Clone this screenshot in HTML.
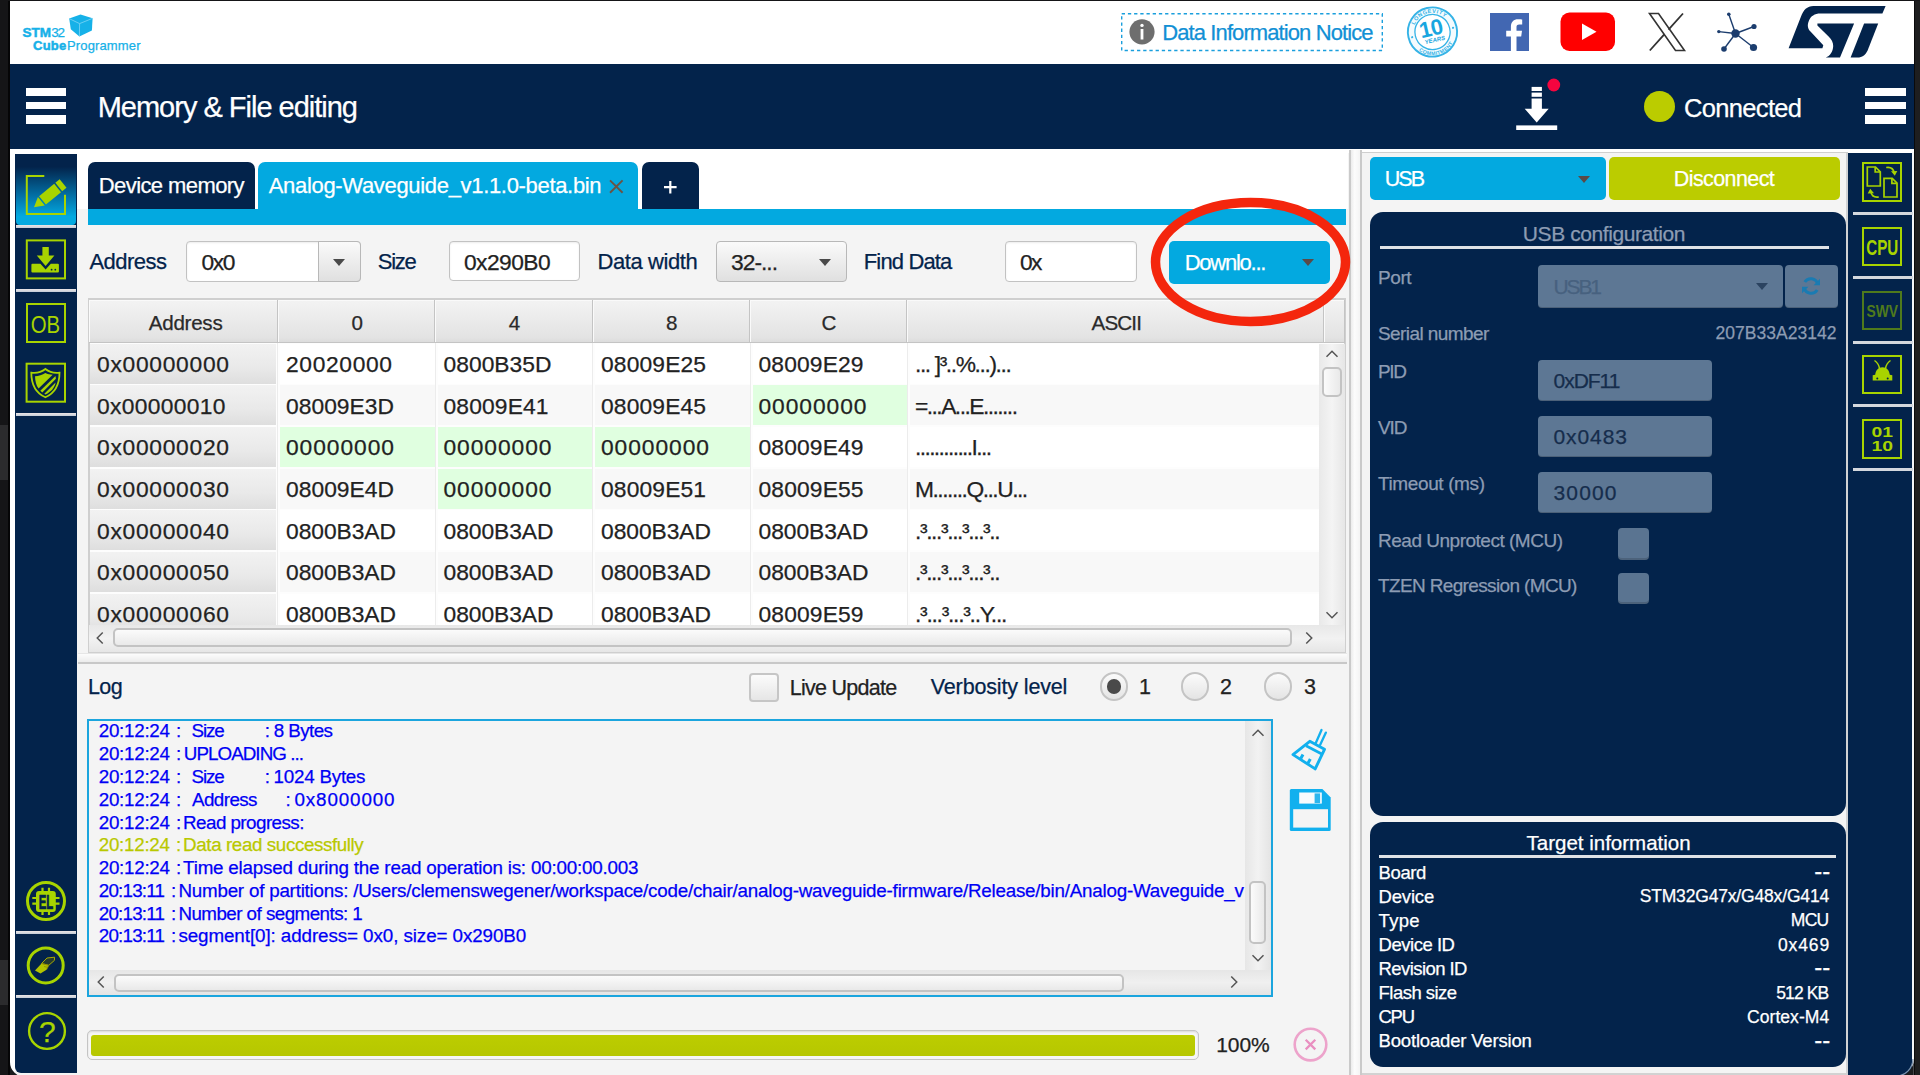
<!DOCTYPE html>
<html lang="en"><head><meta charset="utf-8"><title>STM32CubeProgrammer</title>
<style>
html,body{margin:0;padding:0}
body{width:1920px;height:1075px;overflow:hidden;background:#1b1c1e;position:relative;font-family:"Liberation Sans",sans-serif}
div,span.t,svg{position:absolute;box-sizing:border-box}
span.t{white-space:pre;display:block;-webkit-text-stroke:0.25px}

</style></head><body>
<div style="left:0px;top:0px;width:9px;height:1075px;background:#151517;"></div>
<div style="left:0px;top:424.6px;width:8.2px;height:55.2px;background:#2b2b2d;"></div>
<div style="left:0px;top:959.5px;width:8.2px;height:45.5px;background:#2b2b2d;"></div>
<div style="left:8.2px;top:0px;width:1.8px;height:1075px;background:#050506;"></div>
<div style="left:1914px;top:0px;width:6px;height:1075px;background:#1e1e1f;"></div>
<div style="left:1913.8px;top:1px;width:1.2px;height:1074px;background:#0a0a0b;"></div>
<div style="left:0px;top:0px;width:1920px;height:1.2px;background:#151517;"></div>
<div style="left:10px;top:1px;width:1904px;height:1079px;background:#f4f4f4;border-radius:0 0 11px 11px;"></div>
<div style="left:10px;top:1px;width:1904px;height:63px;background:#fff;"></div>
<div style="left:10px;top:64px;width:1904px;height:85px;background:#03234b;"></div>
<div style="left:10px;top:149px;width:1338px;height:60px;background:#fff;"></div>
<div style="left:10px;top:149px;width:1904px;height:4px;background:#fff;"></div>
<span class="t" id="t1" style="top:25.77px;font-size:13.5px;line-height:13.5px;color:#16b1e8;font-weight:700;left:22.5px;-webkit-text-stroke:0.5px;">STM</span>
<span class="t" id="t2" style="top:25.77px;font-size:13.5px;line-height:13.5px;color:#16b1e8;letter-spacing:-1.331px;left:51.3px;">32</span>
<span class="t" id="t3" style="top:39.30px;font-size:13px;line-height:13px;color:#16b1e8;font-weight:700;letter-spacing:0.267px;left:33px;-webkit-text-stroke:0.5px;">Cube</span>
<span class="t" id="t4" style="top:39.30px;font-size:13px;line-height:13px;color:#16b1e8;letter-spacing:0.139px;left:67px;">Programmer</span>
<svg style="left:68px;top:13px" width="26" height="25" viewBox="0 0 26 25">
<path d="M1.2 5.6 L12.5 1.4 L24.6 5.2 L23.9 17.4 L11.4 23.6 L2.8 16.2 Z" fill="#16b1e8"/>
<path d="M1.6 5.8 L11.6 10.6 L24.4 5.4 M11.6 10.6 L11.4 23.2" stroke="#7fd6f5" stroke-width="0.8" fill="none"/>
</svg>
<svg style="left:1119px;top:11px" width="266" height="42" viewBox="0 0 266 42"><rect x="2.700" y="2.700" width="260.600" height="36.800" fill="none" stroke="#1a9fdd" stroke-width="1.400" stroke-dasharray="3.300 2.900"/></svg>
<svg style="left:1129px;top:19px" width="26" height="26" viewBox="0 0 26 26">
<circle cx="13" cy="12.8" r="12.6" fill="#6e6e6e"/>
<rect x="11.6" y="10" width="2.8" height="10.5" fill="#fff"/><circle cx="13" cy="6.4" r="1.7" fill="#fff"/></svg>
<span class="t" id="t5" style="top:21.88px;font-size:22px;line-height:22px;color:#1190d5;letter-spacing:-0.905px;left:1162.3px;">Data Information Notice</span>
<svg style="left:1404px;top:4px" width="58" height="58" viewBox="0 0 58 58">
<g transform="rotate(-13 28.500 28)">
<circle cx="28.500" cy="28" r="24.600" fill="#f3fbfe" stroke="#35b3e6" stroke-width="1.900"/>
<circle cx="28.500" cy="28" r="17.600" fill="#fff" stroke="#35b3e6" stroke-width="1.300"/>
<path id="arcT" d="M9.300 28 A19.200 19.200 0 0 1 47.700 28" fill="none"/>
<path id="arcB" d="M5.300 28 A23.200 23.200 0 0 0 51.700 28" fill="none"/>
<text font-family="Liberation Sans, sans-serif" font-weight="700" font-size="5.600" fill="#35b3e6" letter-spacing="0.500"><textPath href="#arcT" startOffset="50%" text-anchor="middle">LONGEVITY</textPath></text>
<text font-family="Liberation Sans, sans-serif" font-weight="700" font-size="5.200" fill="#35b3e6" letter-spacing="0.400"><textPath href="#arcB" startOffset="50%" text-anchor="middle">COMMITMENT</textPath></text>
<circle cx="7.500" cy="28.500" r="1.100" fill="#35b3e6"/><circle cx="49.500" cy="28.500" r="1.100" fill="#35b3e6"/>
<text x="27.800" y="31.600" font-family="Liberation Sans, sans-serif" font-weight="700" font-size="22" text-anchor="middle" fill="#18a6e0" letter-spacing="-0.600">10</text>
<text x="29" y="38.300" font-family="Liberation Sans, sans-serif" font-weight="700" font-style="italic" font-size="6" text-anchor="middle" fill="#18a6e0">YEARS</text>
</g></svg>
<svg style="left:1490px;top:13px" width="39" height="38" viewBox="0 0 39 38">
<rect width="39" height="38" fill="#4267b2"/>
<path d="M26.5 38 V23.6 H31.2 L32 17.8 H26.5 V14.3 C26.5 12.7 27 11.6 29.3 11.6 H32.2 V6.5 C31.7 6.4 30 6.3 28 6.3 C23.8 6.3 20.9 8.9 20.9 13.6 V17.8 H16.2 V23.6 H20.9 V38 Z" fill="#fff"/></svg>
<svg style="left:1560px;top:12px" width="56" height="40" viewBox="0 0 56 40">
<rect x="0.5" y="0.5" width="54.5" height="38.5" rx="9" ry="9" fill="#ff0000"/>
<path d="M22 11.5 L36.5 19.7 L22 28 Z" fill="#fff"/></svg>
<svg style="left:1647px;top:12px" width="40" height="40" viewBox="0 0 40 40">
<path d="M2.5 1.5 H11.5 L37.5 38.5 H28.5 Z" fill="#fff" stroke="#333" stroke-width="1.6"/>
<path d="M36 1.5 L21.5 17.6 M17.5 22.2 L2.8 38.5" stroke="#333" stroke-width="1.8" fill="none"/></svg>
<svg style="left:1716px;top:11px" width="44" height="44" viewBox="0 0 44 44">
<g stroke="#1c3d6e" stroke-width="1.4">
<line x1="19.5" y1="22.5" x2="12.8" y2="3.2"/><line x1="19.5" y1="22.5" x2="38" y2="15.5"/>
<line x1="19.5" y1="22.5" x2="37.5" y2="36.5"/><line x1="19.5" y1="22.5" x2="8" y2="38"/>
<line x1="19.5" y1="22.5" x2="2.8" y2="20.6"/></g>
<circle cx="19.5" cy="22.5" r="4.2" fill="#1c3d6e"/><circle cx="12.8" cy="3.2" r="1.8" fill="#1c3d6e"/>
<circle cx="38" cy="15.5" r="2.6" fill="#1c3d6e"/><circle cx="37.5" cy="36.5" r="3.6" fill="#1c3d6e"/>
<circle cx="8" cy="38" r="2.8" fill="#1c3d6e"/><circle cx="2.8" cy="20.6" r="1.7" fill="#1c3d6e"/></svg>
<svg style="left:1780px;top:2px" width="120" height="60" viewBox="0 0 120 60">
<path d="M8.6 46.3 L21 14.6 C23.4 8.2 27 4.1 33.5 4.1 L105.6 4.1 L102.4 11.6 L40.5 11.6 C34.5 11.6 30.8 14.3 29 18.5 C27 23 27.6 26.5 30.5 29.6 L43.3 43.2 L42.4 46.3 Z" fill="#03234b"/>
<path d="M37.4 21.6 L74.1 21.6 L60 55.6 L45.8 55.6 C50 54 53 49.5 53.2 44 C53.2 40.5 51.6 37.6 48.6 34.6 L37.4 23.6 Z" fill="#03234b"/>
<path d="M84.1 21.6 L98.2 21.6 L87.6 48.6 C85.6 53.2 82 55.6 77.6 55.6 L70.6 55.6 Z" fill="#03234b"/>
</svg>
<div style="left:26px;top:88px;width:40.3px;height:8px;background:#fff;"></div>
<div style="left:1865px;top:88px;width:41px;height:8px;background:#fff;"></div>
<div style="left:26px;top:101.5px;width:40.3px;height:7.8px;background:#fff;"></div>
<div style="left:1865px;top:101.5px;width:41px;height:7.8px;background:#fff;"></div>
<div style="left:26px;top:115.3px;width:40.3px;height:8.4px;background:#fff;"></div>
<div style="left:1865px;top:115.3px;width:41px;height:8.4px;background:#fff;"></div>
<span class="t" id="t6" style="top:92.75px;font-size:29px;line-height:29px;color:#fff;letter-spacing:-1.007px;left:97.7px;">Memory &amp; File editing</span>
<svg style="left:1510px;top:72px" width="60" height="64" viewBox="0 0 60 64">
<rect x="6.200" y="53.400" width="41" height="4.600" fill="#fff"/>
<rect x="21.600" y="14.900" width="10.300" height="4.100" fill="#fff"/>
<rect x="21.600" y="20.600" width="10.300" height="4.200" fill="#fff"/>
<path d="M21.600 26.400 H31.900 V36.700 H38.700 L26.700 50.400 L14.700 36.700 H21.600 Z" fill="#fff"/>
<circle cx="43.800" cy="13" r="6.400" fill="#f5053f"/></svg>
<div style="left:1644px;top:91.200px;width:30.800px;height:30.800px;border-radius:50%;background:#bbcc00"></div>
<span class="t" id="t7" style="top:95.61px;font-size:25.5px;line-height:25.5px;color:#fff;letter-spacing:-0.668px;left:1684px;">Connected</span>
<div style="left:10px;top:149px;width:4.6px;height:926px;background:#fff;"></div>
<div style="left:14.6px;top:154px;width:62.4px;height:918.6px;background:#03234b;border-radius:0 0 0 6px;"></div>
<div style="left:16px;top:154px;width:59.6px;height:70.8px;background:linear-gradient(#03234b 0%,#03234b 18%,#0372a8 60%,#03a9e0 88%,#03a9e0 100%);border-radius:0 0 4px 4px;"></div>
<div style="left:16px;top:225.3px;width:59.6px;height:3px;background:linear-gradient(#ece6e6,#c2cbd8);"></div>
<div style="left:16px;top:289.3px;width:59.6px;height:3px;background:linear-gradient(#ece6e6,#c2cbd8);"></div>
<div style="left:16px;top:412.5px;width:59.6px;height:3px;background:linear-gradient(#ece6e6,#c2cbd8);"></div>
<div style="left:16px;top:931px;width:59.6px;height:3px;background:linear-gradient(#ece6e6,#c2cbd8);"></div>
<div style="left:16px;top:995.2px;width:59.6px;height:3px;background:linear-gradient(#ece6e6,#c2cbd8);"></div>
<svg style="left:22px;top:170px" width="50" height="50" viewBox="0 0 50 50">
<path d="M22.300 6 H4.800 V44 H43 V24.700" fill="none" stroke="#a8d400" stroke-width="2"/>
<g transform="translate(12,37.300) rotate(-39.300)">
<path d="M0 0 L9.500 -5.400 V5.400 Z" fill="#a8d400"/>
<rect x="11" y="-5.400" width="19.500" height="10.800" fill="#a8d400"/>
<rect x="32" y="-5.400" width="5.600" height="10.800" fill="#a8d400"/>
</g></svg>
<svg style="left:22px;top:235px" width="50" height="50" viewBox="0 0 50 50">
<rect x="4.800" y="5.400" width="38.200" height="38" fill="none" stroke="#a8d400" stroke-width="2"/>
<path d="M20.400 12 H26.800 V20.400 H32.400 L23.600 30.900 L14.800 20.400 H20.400 Z" fill="#a8d400"/>
<path d="M10.400 28.800 H18.400 L23.600 34.600 L28.800 28.800 H35.900 Q36.900 28.800 36.900 29.800 V36.600 Q36.900 37.600 35.900 37.600 H10.400 Q9.400 37.600 9.400 36.600 V29.800 Q9.400 28.800 10.400 28.800 Z" fill="#a8d400"/>
<circle cx="29.600" cy="34.700" r="0.900" fill="#03234b"/><circle cx="33.300" cy="34.700" r="0.900" fill="#03234b"/>
</svg>
<div style="left:25.6px;top:303px;width:40.4px;height:40.4px;border:2px solid #a8d400;"></div>
<svg style="left:26px;top:304px" width="40" height="39" viewBox="0 0 40 39"><text x="4.800" y="29" font-family="Liberation Sans, sans-serif" font-size="24.500" fill="#a8d400" textLength="29.400" lengthAdjust="spacingAndGlyphs">OB</text></svg>
<svg style="left:22px;top:359px" width="50" height="50" viewBox="0 0 50 50">
<rect x="4.600" y="4.700" width="38.400" height="38" fill="none" stroke="#a8d400" stroke-width="2"/>
<path d="M23.400 10 C19.500 13.200 13.500 14.200 9.300 13.700 C9.300 25 12.800 33.500 23.400 38.300 C34 33.500 37.500 25 37.500 13.700 C33.300 14.200 27.300 13.200 23.400 10 Z" fill="none" stroke="#a8d400" stroke-width="1.800"/>
<path d="M23.400 14 C20.500 16 16.500 17.200 13 17.200 C13.200 22.500 14.300 26.500 16.600 29.600 L30.700 15.700 C28 15.700 25.400 15.200 23.400 14 Z" fill="#a8d400"/>
<path d="M18.300 31.700 L33.500 16.900 L33.900 19.800 L20.300 33.400 Z" fill="#a8d400"/>
<path d="M22.300 34.800 L33.600 23.400 C32.800 28 29.500 32.500 23.400 35.500 Z" fill="#a8d400"/>
</svg>
<svg style="left:22px;top:877px" width="48" height="48" viewBox="0 0 48 48">
<circle cx="24" cy="24" r="18.500" fill="none" stroke="#a8d400" stroke-width="3"/>
<rect x="14" y="14" width="19.800" height="20.900" rx="3" fill="#a8d400"/>
<g stroke="#a8d400" stroke-width="2.200">
<path d="M20.500 10.800 V38 M27 10.800 V38"/>
<path d="M10.300 21 H37.500 M10.300 26.600 H37.500"/></g>
<text x="16.700" y="31.600" font-family="Liberation Sans, sans-serif" font-weight="700" font-size="20" fill="#03234b" stroke="#03234b" stroke-width="0.700" textLength="14.500" lengthAdjust="spacingAndGlyphs">EL</text>
</svg>
<svg style="left:22px;top:942px" width="48" height="48" viewBox="0 0 48 48">
<circle cx="23.700" cy="23.400" r="17.500" fill="none" stroke="#a8d400" stroke-width="3"/>
<path d="M13 28.500 L19.500 21.500 L26.800 23.300 L24.500 27.800 L18.500 31.500 Z" fill="#b3c400"/>
<path d="M19.500 21.500 L25 16 L32.600 15.200 L32.400 18.400 L26.800 23.300 Z" fill="#243a2f" stroke="#a7a900" stroke-width="1"/>
<path d="M19.500 21.500 L26.800 23.300 L24.500 27.800 M22 24.500 L25.500 25.300" fill="none" stroke="#8f8a00" stroke-width="0.800"/>
</svg>
<svg style="left:24px;top:1008px" width="46" height="46" viewBox="0 0 46 46">
<circle cx="23" cy="23" r="17.900" fill="none" stroke="#a8d400" stroke-width="2.400"/></svg>
<span class="t" id="t8" style="top:1017.11px;font-size:30px;line-height:30px;color:#a8d400;left:-352.7px;width:800px;text-align:center;">?</span>
<div style="left:88px;top:162px;width:167.3px;height:47px;background:#03234b;border-radius:7px 7px 0 0;"></div>
<span class="t" id="t9" style="top:175.38px;font-size:22px;line-height:22px;color:#fff;letter-spacing:-0.580px;left:98.75px;">Device memory</span>
<div style="left:258.3px;top:162px;width:380.2px;height:47px;background:#03a9e0;border-radius:7px 7px 0 0;"></div>
<span class="t" id="t10" style="top:175.13px;font-size:22px;line-height:22px;color:#fff;letter-spacing:-0.323px;left:268.75px;">Analog-Waveguide_v1.1.0-beta.bin</span>
<svg style="left:608px;top:178px" width="17" height="17" viewBox="0 0 17 17">
<path d="M2 2.400 L14.600 14.800 M14.600 2.400 L2 14.800" stroke="#6b5344" stroke-width="1.900" fill="none"/></svg>
<div style="left:642px;top:162px;width:57.2px;height:47px;background:#03234b;border-radius:7px 7px 0 0;"></div>
<svg style="left:662px;top:179px" width="17" height="17" viewBox="0 0 17 17">
<path d="M8.300 1.900 V14.500 M2 8.200 H14.600" stroke="#fff" stroke-width="2.200" fill="none"/></svg>
<div style="left:88px;top:208.7px;width:1258px;height:15.9px;background:#03a9e0;"></div>
<span class="t" id="t11" style="top:251.18px;font-size:22px;line-height:22px;color:#03234b;letter-spacing:-0.520px;left:89.4px;">Address</span>
<div style="left:186px;top:241px;width:174.6px;height:40.8px;background:#fff;border:1px solid #c2c2c2;border-radius:4px;box-shadow:inset 0 1px 2px rgba(0,0,0,0.08);"></div>
<div style="left:318px;top:241px;width:42.6px;height:40.8px;background:linear-gradient(#fafafa,#e0e0e0);border:1px solid #b8b8b8;border-radius:4px;border-radius:0 4px 4px 0;"></div>
<svg style="left:332px;top:257.5px" width="14" height="9" viewBox="-1 -1 14 9"><path d="M0 0 H12 L6.0 7 Z" fill="#4a4a4a"/></svg>
<span class="t" id="t12" style="top:250.70px;font-size:22.8px;line-height:22.8px;color:#222;letter-spacing:-1.383px;left:201.5px;">0x0</span>
<span class="t" id="t13" style="top:251.18px;font-size:22px;line-height:22px;color:#03234b;letter-spacing:-1.232px;left:377.7px;">Size</span>
<div style="left:449.3px;top:241px;width:130.7px;height:40.4px;background:#fff;border:1px solid #c2c2c2;border-radius:4px;box-shadow:inset 0 1px 2px rgba(0,0,0,0.08);"></div>
<span class="t" id="t14" style="top:250.70px;font-size:22.8px;line-height:22.8px;color:#222;letter-spacing:-0.567px;left:464px;">0x290B0</span>
<span class="t" id="t15" style="top:251.18px;font-size:22px;line-height:22px;color:#03234b;letter-spacing:-0.406px;left:597.5px;">Data width</span>
<div style="left:715.5px;top:241px;width:131px;height:40.6px;background:linear-gradient(#fafafa,#e0e0e0);border:1px solid #b8b8b8;border-radius:4px;"></div>
<span class="t" id="t16" style="top:250.70px;font-size:22.8px;line-height:22.8px;color:#222;letter-spacing:-0.991px;left:731px;">32-...</span>
<svg style="left:818.4px;top:257.5px" width="14" height="9" viewBox="-1 -1 14 9"><path d="M0 0 H12 L6.0 7 Z" fill="#4a4a4a"/></svg>
<span class="t" id="t17" style="top:251.18px;font-size:22px;line-height:22px;color:#03234b;letter-spacing:-0.861px;left:863.8px;">Find Data</span>
<div style="left:1004.6px;top:241.3px;width:132.4px;height:40.3px;background:#fff;border:1px solid #c2c2c2;border-radius:4px;box-shadow:inset 0 1px 2px rgba(0,0,0,0.08);"></div>
<span class="t" id="t18" style="top:250.70px;font-size:22.8px;line-height:22.8px;color:#222;letter-spacing:-1.578px;left:1020px;">0x</span>
<div style="left:1169.3px;top:241px;width:160.7px;height:42.8px;background:#03a9e0;border-radius:5px;"></div>
<span class="t" id="t19" style="top:251.68px;font-size:22px;line-height:22px;color:#fff;letter-spacing:-1.240px;left:1184.7px;">Downlo...</span>
<svg style="left:1301px;top:258px" width="14" height="9" viewBox="-1 -1 14 9"><path d="M0 0 H12 L6.0 7 Z" fill="#5a4a48"/></svg>
<div style="left:87.6px;top:298.2px;width:1258.8px;height:354.8px;background:#fdfdfd;border:2px solid #cfcfcf;"></div>
<div style="left:89px;top:299.6px;width:188.5px;height:43.4px;background:linear-gradient(#f3f3f3,#e3e3e3 90%,#dcdcdc);border-right:1px solid #c4c4c4;border-bottom:1px solid #c4c4c4;box-shadow:inset 1px 1px 0 #fafafa;"></div>
<span class="t" id="t20" style="top:312.96px;font-size:20.6px;line-height:20.6px;color:#2a2a2a;letter-spacing:-0.269px;left:148.75px;">Address</span>
<div style="left:277.5px;top:299.6px;width:157.5px;height:43.4px;background:linear-gradient(#f3f3f3,#e3e3e3 90%,#dcdcdc);border-right:1px solid #c4c4c4;border-bottom:1px solid #c4c4c4;box-shadow:inset 1px 1px 0 #fafafa;"></div>
<span class="t" id="t21" style="top:312.96px;font-size:20.6px;line-height:20.6px;color:#2a2a2a;letter-spacing:1.031px;left:351.5px;">0</span>
<div style="left:435px;top:299.6px;width:157.5px;height:43.4px;background:linear-gradient(#f3f3f3,#e3e3e3 90%,#dcdcdc);border-right:1px solid #c4c4c4;border-bottom:1px solid #c4c4c4;box-shadow:inset 1px 1px 0 #fafafa;"></div>
<span class="t" id="t22" style="top:312.96px;font-size:20.6px;line-height:20.6px;color:#2a2a2a;letter-spacing:1.231px;left:508.8px;">4</span>
<div style="left:592.5px;top:299.6px;width:157.5px;height:43.4px;background:linear-gradient(#f3f3f3,#e3e3e3 90%,#dcdcdc);border-right:1px solid #c4c4c4;border-bottom:1px solid #c4c4c4;box-shadow:inset 1px 1px 0 #fafafa;"></div>
<span class="t" id="t23" style="top:312.96px;font-size:20.6px;line-height:20.6px;color:#2a2a2a;letter-spacing:1.031px;left:666px;">8</span>
<div style="left:750px;top:299.6px;width:157px;height:43.4px;background:linear-gradient(#f3f3f3,#e3e3e3 90%,#dcdcdc);border-right:1px solid #c4c4c4;border-bottom:1px solid #c4c4c4;box-shadow:inset 1px 1px 0 #fafafa;"></div>
<span class="t" id="t24" style="top:312.96px;font-size:20.6px;line-height:20.6px;color:#2a2a2a;letter-spacing:-0.375px;left:821.5px;">C</span>
<div style="left:907px;top:299.6px;width:416.6px;height:43.4px;background:linear-gradient(#f3f3f3,#e3e3e3 90%,#dcdcdc);border-right:1px solid #c4c4c4;border-bottom:1px solid #c4c4c4;box-shadow:inset 1px 1px 0 #fafafa;"></div>
<span class="t" id="t25" style="top:312.96px;font-size:20.6px;line-height:20.6px;color:#2a2a2a;letter-spacing:-0.824px;left:1091.5px;">ASCII</span>
<div style="left:1323.6px;top:299.6px;width:21.4px;height:43.4px;background:linear-gradient(#f3f3f3,#e3e3e3 90%,#dcdcdc);border-right:1px solid #c4c4c4;border-bottom:1px solid #c4c4c4;box-shadow:inset 1px 1px 0 #fafafa;"></div>
<div style="left:89px;top:343px;width:1230px;height:281.500px;overflow:hidden">
<div style="left:1px;top:0.75px;width:186px;height:40.05px;background:linear-gradient(#f2f2f2,#e9e9e9 60%,#dedede);"></div>
<div style="left:191px;top:0.75px;width:154.5px;height:40.05px;background:#ffffff;"></div>
<div style="left:348.5px;top:0.75px;width:154.5px;height:40.05px;background:#ffffff;"></div>
<div style="left:506px;top:0.75px;width:154.5px;height:40.05px;background:#ffffff;"></div>
<div style="left:663.5px;top:0.75px;width:154px;height:40.05px;background:#ffffff;"></div>
<div style="left:820.5px;top:0.75px;width:409.5px;height:40.05px;background:#ffffff;"></div>
<div style="left:1px;top:42.4px;width:186px;height:40.05px;background:linear-gradient(#f2f2f2,#e9e9e9 60%,#dedede);"></div>
<div style="left:191px;top:42.4px;width:154.5px;height:40.05px;background:#f8f8f8;"></div>
<div style="left:348.5px;top:42.4px;width:154.5px;height:40.05px;background:#f8f8f8;"></div>
<div style="left:506px;top:42.4px;width:154.5px;height:40.05px;background:#f8f8f8;"></div>
<div style="left:663.5px;top:42.4px;width:154px;height:40.05px;background:#e0ffe0;"></div>
<div style="left:820.5px;top:42.4px;width:409.5px;height:40.05px;background:#f8f8f8;"></div>
<div style="left:1px;top:84.05px;width:186px;height:40.05px;background:linear-gradient(#f2f2f2,#e9e9e9 60%,#dedede);"></div>
<div style="left:191px;top:84.05px;width:154.5px;height:40.05px;background:#e0ffe0;"></div>
<div style="left:348.5px;top:84.05px;width:154.5px;height:40.05px;background:#e0ffe0;"></div>
<div style="left:506px;top:84.05px;width:154.5px;height:40.05px;background:#e0ffe0;"></div>
<div style="left:663.5px;top:84.05px;width:154px;height:40.05px;background:#ffffff;"></div>
<div style="left:820.5px;top:84.05px;width:409.5px;height:40.05px;background:#ffffff;"></div>
<div style="left:1px;top:125.7px;width:186px;height:40.05px;background:linear-gradient(#f2f2f2,#e9e9e9 60%,#dedede);"></div>
<div style="left:191px;top:125.7px;width:154.5px;height:40.05px;background:#f8f8f8;"></div>
<div style="left:348.5px;top:125.7px;width:154.5px;height:40.05px;background:#e0ffe0;"></div>
<div style="left:506px;top:125.7px;width:154.5px;height:40.05px;background:#f8f8f8;"></div>
<div style="left:663.5px;top:125.7px;width:154px;height:40.05px;background:#f8f8f8;"></div>
<div style="left:820.5px;top:125.7px;width:409.5px;height:40.05px;background:#f8f8f8;"></div>
<div style="left:1px;top:167.35px;width:186px;height:40.05px;background:linear-gradient(#f2f2f2,#e9e9e9 60%,#dedede);"></div>
<div style="left:191px;top:167.35px;width:154.5px;height:40.05px;background:#ffffff;"></div>
<div style="left:348.5px;top:167.35px;width:154.5px;height:40.05px;background:#ffffff;"></div>
<div style="left:506px;top:167.35px;width:154.5px;height:40.05px;background:#ffffff;"></div>
<div style="left:663.5px;top:167.35px;width:154px;height:40.05px;background:#ffffff;"></div>
<div style="left:820.5px;top:167.35px;width:409.5px;height:40.05px;background:#ffffff;"></div>
<div style="left:1px;top:209px;width:186px;height:40.05px;background:linear-gradient(#f2f2f2,#e9e9e9 60%,#dedede);"></div>
<div style="left:191px;top:209px;width:154.5px;height:40.05px;background:#f8f8f8;"></div>
<div style="left:348.5px;top:209px;width:154.5px;height:40.05px;background:#f8f8f8;"></div>
<div style="left:506px;top:209px;width:154.5px;height:40.05px;background:#f8f8f8;"></div>
<div style="left:663.5px;top:209px;width:154px;height:40.05px;background:#f8f8f8;"></div>
<div style="left:820.5px;top:209px;width:409.5px;height:40.05px;background:#f8f8f8;"></div>
<div style="left:1px;top:250.65px;width:186px;height:40.05px;background:linear-gradient(#f2f2f2,#e9e9e9 60%,#dedede);"></div>
<div style="left:191px;top:250.65px;width:154.5px;height:40.05px;background:#ffffff;"></div>
<div style="left:348.5px;top:250.65px;width:154.5px;height:40.05px;background:#ffffff;"></div>
<div style="left:506px;top:250.65px;width:154.5px;height:40.05px;background:#ffffff;"></div>
<div style="left:663.5px;top:250.65px;width:154px;height:40.05px;background:#ffffff;"></div>
<div style="left:820.5px;top:250.65px;width:409.5px;height:40.05px;background:#ffffff;"></div>
</div>
<span class="t" id="t26" style="top:353.00px;font-size:22.8px;line-height:22.8px;color:#222;letter-spacing:0.720px;left:97px;">0x00000000</span>
<span class="t" id="t27" style="top:353.00px;font-size:22.8px;line-height:22.8px;color:#222;letter-spacing:0.652px;left:286px;">20020000</span>
<span class="t" id="t28" style="top:353.00px;font-size:22.8px;line-height:22.8px;color:#222;letter-spacing:0.036px;left:443.5px;">0800B35D</span>
<span class="t" id="t29" style="top:353.00px;font-size:22.8px;line-height:22.8px;color:#222;letter-spacing:0.147px;left:601px;">08009E25</span>
<span class="t" id="t30" style="top:353.00px;font-size:22.8px;line-height:22.8px;color:#222;letter-spacing:0.147px;left:758.5px;">08009E29</span>
<span class="t" id="t31" style="top:353.00px;font-size:22.8px;line-height:22.8px;color:#222;letter-spacing:-1.400px;left:915px;">... ]³..%...)...</span>
<span class="t" id="t32" style="top:394.65px;font-size:22.8px;line-height:22.8px;color:#222;letter-spacing:0.332px;left:97px;">0x00000010</span>
<span class="t" id="t33" style="top:394.65px;font-size:22.8px;line-height:22.8px;color:#222;letter-spacing:0.036px;left:286px;">08009E3D</span>
<span class="t" id="t34" style="top:394.65px;font-size:22.8px;line-height:22.8px;color:#222;letter-spacing:0.147px;left:443.5px;">08009E41</span>
<span class="t" id="t35" style="top:394.65px;font-size:22.8px;line-height:22.8px;color:#222;letter-spacing:0.147px;left:601px;">08009E45</span>
<span class="t" id="t36" style="top:394.65px;font-size:22.8px;line-height:22.8px;color:#222;letter-spacing:0.938px;left:758.5px;">00000000</span>
<span class="t" id="t37" style="top:394.65px;font-size:22.8px;line-height:22.8px;color:#222;letter-spacing:-1.538px;left:915px;">=...A...E.......</span>
<span class="t" id="t38" style="top:436.30px;font-size:22.8px;line-height:22.8px;color:#222;letter-spacing:0.720px;left:97px;">0x00000020</span>
<span class="t" id="t39" style="top:436.30px;font-size:22.8px;line-height:22.8px;color:#222;letter-spacing:0.938px;left:286px;">00000000</span>
<span class="t" id="t40" style="top:436.30px;font-size:22.8px;line-height:22.8px;color:#222;letter-spacing:0.938px;left:443.5px;">00000000</span>
<span class="t" id="t41" style="top:436.30px;font-size:22.8px;line-height:22.8px;color:#222;letter-spacing:0.938px;left:601px;">00000000</span>
<span class="t" id="t42" style="top:436.30px;font-size:22.8px;line-height:22.8px;color:#222;letter-spacing:0.147px;left:758.5px;">08009E49</span>
<span class="t" id="t43" style="top:436.30px;font-size:22.8px;line-height:22.8px;color:#222;letter-spacing:-1.623px;left:915px;">............I...</span>
<span class="t" id="t44" style="top:477.95px;font-size:22.8px;line-height:22.8px;color:#222;letter-spacing:0.720px;left:97px;">0x00000030</span>
<span class="t" id="t45" style="top:477.95px;font-size:22.8px;line-height:22.8px;color:#222;letter-spacing:0.036px;left:286px;">08009E4D</span>
<span class="t" id="t46" style="top:477.95px;font-size:22.8px;line-height:22.8px;color:#222;letter-spacing:0.938px;left:443.5px;">00000000</span>
<span class="t" id="t47" style="top:477.95px;font-size:22.8px;line-height:22.8px;color:#222;letter-spacing:0.147px;left:601px;">08009E51</span>
<span class="t" id="t48" style="top:477.95px;font-size:22.8px;line-height:22.8px;color:#222;letter-spacing:0.147px;left:758.5px;">08009E55</span>
<span class="t" id="t49" style="top:477.95px;font-size:22.8px;line-height:22.8px;color:#222;letter-spacing:-1.489px;left:915px;">M.......Q...U...</span>
<span class="t" id="t50" style="top:519.60px;font-size:22.8px;line-height:22.8px;color:#222;letter-spacing:0.720px;left:97px;">0x00000040</span>
<span class="t" id="t51" style="top:519.60px;font-size:22.8px;line-height:22.8px;color:#222;letter-spacing:-0.040px;left:286px;">0800B3AD</span>
<span class="t" id="t52" style="top:519.60px;font-size:22.8px;line-height:22.8px;color:#222;letter-spacing:-0.040px;left:443.5px;">0800B3AD</span>
<span class="t" id="t53" style="top:519.60px;font-size:22.8px;line-height:22.8px;color:#222;letter-spacing:-0.040px;left:601px;">0800B3AD</span>
<span class="t" id="t54" style="top:519.60px;font-size:22.8px;line-height:22.8px;color:#222;letter-spacing:-0.040px;left:758.5px;">0800B3AD</span>
<span class="t" id="t55" style="top:519.60px;font-size:22.8px;line-height:22.8px;color:#222;letter-spacing:-1.385px;left:915px;">.³...³...³...³..</span>
<span class="t" id="t56" style="top:561.25px;font-size:22.8px;line-height:22.8px;color:#222;letter-spacing:0.720px;left:97px;">0x00000050</span>
<span class="t" id="t57" style="top:561.25px;font-size:22.8px;line-height:22.8px;color:#222;letter-spacing:-0.040px;left:286px;">0800B3AD</span>
<span class="t" id="t58" style="top:561.25px;font-size:22.8px;line-height:22.8px;color:#222;letter-spacing:-0.040px;left:443.5px;">0800B3AD</span>
<span class="t" id="t59" style="top:561.25px;font-size:22.8px;line-height:22.8px;color:#222;letter-spacing:-0.040px;left:601px;">0800B3AD</span>
<span class="t" id="t60" style="top:561.25px;font-size:22.8px;line-height:22.8px;color:#222;letter-spacing:-0.040px;left:758.5px;">0800B3AD</span>
<span class="t" id="t61" style="top:561.25px;font-size:22.8px;line-height:22.8px;color:#222;letter-spacing:-1.385px;left:915px;">.³...³...³...³..</span>
<span class="t" id="t62" style="top:602.90px;font-size:22.8px;line-height:22.8px;color:#222;letter-spacing:0.720px;left:97px;clip-path:inset(0 0 2.7px 0);">0x00000060</span>
<span class="t" id="t63" style="top:602.90px;font-size:22.8px;line-height:22.8px;color:#222;letter-spacing:-0.040px;left:286px;clip-path:inset(0 0 2.7px 0);">0800B3AD</span>
<span class="t" id="t64" style="top:602.90px;font-size:22.8px;line-height:22.8px;color:#222;letter-spacing:-0.040px;left:443.5px;clip-path:inset(0 0 2.7px 0);">0800B3AD</span>
<span class="t" id="t65" style="top:602.90px;font-size:22.8px;line-height:22.8px;color:#222;letter-spacing:-0.040px;left:601px;clip-path:inset(0 0 2.7px 0);">0800B3AD</span>
<span class="t" id="t66" style="top:602.90px;font-size:22.8px;line-height:22.8px;color:#222;letter-spacing:0.147px;left:758.5px;clip-path:inset(0 0 2.7px 0);">08009E59</span>
<span class="t" id="t67" style="top:602.90px;font-size:22.8px;line-height:22.8px;color:#222;letter-spacing:-1.250px;left:915px;clip-path:inset(0 0 2.7px 0);">.³...³...³..Y...</span>
<div style="left:277px;top:343px;width:1px;height:281.5px;background:#ececec;"></div>
<div style="left:434.5px;top:343px;width:1px;height:281.5px;background:#ececec;"></div>
<div style="left:592px;top:343px;width:1px;height:281.5px;background:#ececec;"></div>
<div style="left:749.5px;top:343px;width:1px;height:281.5px;background:#ececec;"></div>
<div style="left:906.5px;top:343px;width:1px;height:281.5px;background:#ececec;"></div>
<div style="left:1319.2px;top:343.5px;width:25.8px;height:281px;background:linear-gradient(90deg,#e9e9e9,#f4f4f4 50%,#e6e6e6);"></div>
<div style="left:1322.4px;top:367px;width:19.2px;height:30px;background:linear-gradient(90deg,#fbfbfb,#e9e9e9);border:2px solid #c3c3c3;border-radius:5px;"></div>
<svg style="left:1322px;top:343.5px" width="20" height="20" viewBox="-10 -10 20 20"><path d="M-5.5 2.75 L0 -2.75 L5.5 2.75" fill="none" stroke="#555" stroke-width="1.500"/></svg>
<svg style="left:1322px;top:604.5px" width="20" height="20" viewBox="-10 -10 20 20"><path d="M-5.5 -2.75 L0 2.75 L5.5 -2.75" fill="none" stroke="#555" stroke-width="1.500"/></svg>
<div style="left:89px;top:624.5px;width:1256px;height:27.1px;background:linear-gradient(#e8e8e8,#f2f2f2 50%,#e6e6e6);"></div>
<div style="left:112.5px;top:628px;width:1179.5px;height:19px;background:linear-gradient(#fbfbfb,#e9e9e9);border:2px solid #c3c3c3;border-radius:5px;"></div>
<svg style="left:90px;top:627.5px" width="20" height="20" viewBox="-10 -10 20 20"><path d="M2.75 -5.5 L-2.75 0 L2.75 5.5" fill="none" stroke="#555" stroke-width="1.500"/></svg>
<svg style="left:1298.5px;top:627.5px" width="20" height="20" viewBox="-10 -10 20 20"><path d="M-2.75 -5.5 L2.75 0 L-2.75 5.5" fill="none" stroke="#555" stroke-width="1.500"/></svg>
<div style="left:78px;top:652.8px;width:1269px;height:10.8px;background:linear-gradient(#fcfcfc,#ececec);border-bottom:2px solid #c8c8c8;border-top:1px solid #e6e6e6;"></div>
<div style="left:1349.2px;top:150px;width:12.6px;height:925px;background:linear-gradient(90deg,#ececec,#fcfcfc 40%,#f4f4f4);border-left:2px solid #cacaca;border-right:2px solid #cacaca;"></div>
<div style="left:1362px;top:152px;width:486px;height:1.4px;background:#cfcfcf;"></div>
<svg style="left:1140px;top:190px" width="220" height="145" viewBox="0 0 220 145">
<ellipse cx="110.500" cy="72" rx="95" ry="59.500" fill="none" stroke="#f4260d" stroke-width="9.500"/></svg>
<span class="t" id="t68" style="top:677.00px;font-size:21.5px;line-height:21.5px;color:#03234b;letter-spacing:-0.587px;left:88px;">Log</span>
<div style="left:749.4px;top:672.8px;width:29.6px;height:29.7px;background:linear-gradient(#fbfbfb,#e6e6e6);border:2px solid #c6c6c6;border-radius:4px;"></div>
<span class="t" id="t69" style="top:678.10px;font-size:21.5px;line-height:21.5px;color:#222;letter-spacing:-0.715px;left:789.7px;">Live Update</span>
<span class="t" id="t70" style="top:676.80px;font-size:21.5px;line-height:21.5px;color:#03234b;letter-spacing:-0.146px;left:930.8px;">Verbosity level</span>
<div style="left:1099.9px;top:672.3px;width:28.6px;height:28.6px;background:linear-gradient(#fbfbfb,#e4e4e4);border:2px solid #c4c4c4;border-radius:50%;"></div>
<div style="left:1107px;top:679.4px;width:14.4px;height:14.4px;background:#4a4a4a;border-radius:50%;"></div>
<span class="t" id="t71" style="top:676.50px;font-size:21.5px;line-height:21.5px;color:#222;letter-spacing:-2.469px;left:1139px;">1</span>
<div style="left:1180.7px;top:672.3px;width:28.6px;height:28.6px;background:linear-gradient(#fbfbfb,#e4e4e4);border:2px solid #c4c4c4;border-radius:50%;"></div>
<span class="t" id="t72" style="top:676.50px;font-size:21.5px;line-height:21.5px;color:#222;letter-spacing:-0.969px;left:1220px;">2</span>
<div style="left:1263.7px;top:672.3px;width:28.6px;height:28.6px;background:linear-gradient(#fbfbfb,#e4e4e4);border:2px solid #c4c4c4;border-radius:50%;"></div>
<span class="t" id="t73" style="top:676.50px;font-size:21.5px;line-height:21.5px;color:#222;letter-spacing:-0.969px;left:1304px;">3</span>
<div style="left:86.9px;top:719.4px;width:1186.5px;height:277.8px;border:2px solid #1ba5de;background:#f4f4f4;"></div>
<span class="t" id="t74" style="top:722.39px;font-size:18.8px;line-height:18.8px;color:#0000f5;letter-spacing:-0.266px;left:98.75px;">20:12:24</span>
<span class="t" id="t75" style="top:722.39px;font-size:18.8px;line-height:18.8px;color:#0000f5;left:176px;">:</span>
<span class="t" id="t76" style="top:722.39px;font-size:18.8px;line-height:18.8px;color:#0000f5;letter-spacing:-1.082px;left:191.5px;">Size</span>
<span class="t" id="t77" style="top:722.39px;font-size:18.8px;line-height:18.8px;color:#0000f5;left:264.7px;">:</span>
<span class="t" id="t78" style="top:722.39px;font-size:18.8px;line-height:18.8px;color:#0000f5;letter-spacing:-0.565px;left:273.75px;">8 Bytes</span>
<span class="t" id="t79" style="top:745.17px;font-size:18.8px;line-height:18.8px;color:#0000f5;letter-spacing:-0.266px;left:98.75px;">20:12:24</span>
<span class="t" id="t80" style="top:745.17px;font-size:18.8px;line-height:18.8px;color:#0000f5;left:176px;">:</span>
<span class="t" id="t81" style="top:745.17px;font-size:18.8px;line-height:18.8px;color:#0000f5;letter-spacing:-0.938px;left:183.75px;">UPLOADING ...</span>
<span class="t" id="t82" style="top:767.95px;font-size:18.8px;line-height:18.8px;color:#0000f5;letter-spacing:-0.266px;left:98.75px;">20:12:24</span>
<span class="t" id="t83" style="top:767.95px;font-size:18.8px;line-height:18.8px;color:#0000f5;left:176px;">:</span>
<span class="t" id="t84" style="top:767.95px;font-size:18.8px;line-height:18.8px;color:#0000f5;letter-spacing:-1.082px;left:191.5px;">Size</span>
<span class="t" id="t85" style="top:767.95px;font-size:18.8px;line-height:18.8px;color:#0000f5;left:264.7px;">:</span>
<span class="t" id="t86" style="top:767.95px;font-size:18.8px;line-height:18.8px;color:#0000f5;letter-spacing:-0.220px;left:273.5px;">1024 Bytes</span>
<span class="t" id="t87" style="top:790.73px;font-size:18.8px;line-height:18.8px;color:#0000f5;letter-spacing:-0.266px;left:98.75px;">20:12:24</span>
<span class="t" id="t88" style="top:790.73px;font-size:18.8px;line-height:18.8px;color:#0000f5;left:176px;">:</span>
<span class="t" id="t89" style="top:790.73px;font-size:18.8px;line-height:18.8px;color:#0000f5;letter-spacing:-0.568px;left:192px;">Address</span>
<span class="t" id="t90" style="top:790.73px;font-size:18.8px;line-height:18.8px;color:#0000f5;left:285.5px;">:</span>
<span class="t" id="t91" style="top:790.73px;font-size:18.8px;line-height:18.8px;color:#0000f5;letter-spacing:0.881px;left:294.5px;">0x8000000</span>
<span class="t" id="t92" style="top:813.51px;font-size:18.8px;line-height:18.8px;color:#0000f5;letter-spacing:-0.266px;left:98.75px;">20:12:24</span>
<span class="t" id="t93" style="top:813.51px;font-size:18.8px;line-height:18.8px;color:#0000f5;left:176px;">:</span>
<span class="t" id="t94" style="top:813.51px;font-size:18.8px;line-height:18.8px;color:#0000f5;letter-spacing:-0.547px;left:183.1px;">Read progress:</span>
<span class="t" id="t95" style="top:836.29px;font-size:18.8px;line-height:18.8px;color:#b9c800;letter-spacing:-0.266px;left:98.75px;">20:12:24</span>
<span class="t" id="t96" style="top:836.29px;font-size:18.8px;line-height:18.8px;color:#b9c800;left:176px;">:</span>
<span class="t" id="t97" style="top:836.29px;font-size:18.8px;line-height:18.8px;color:#b9c800;letter-spacing:-0.395px;left:183.1px;">Data read successfully</span>
<span class="t" id="t98" style="top:859.07px;font-size:18.8px;line-height:18.8px;color:#0000f5;letter-spacing:-0.266px;left:98.75px;">20:12:24</span>
<span class="t" id="t99" style="top:859.07px;font-size:18.8px;line-height:18.8px;color:#0000f5;left:176px;">:</span>
<span class="t" id="t100" style="top:859.07px;font-size:18.8px;line-height:18.8px;color:#0000f5;letter-spacing:-0.199px;left:183.1px;">Time elapsed during the read operation is: 00:00:00.003</span>
<div style="left:89px;top:721.500px;width:1156px;height:248px;overflow:hidden">
</div>
<span class="t" id="t101" style="top:881.85px;font-size:18.8px;line-height:18.8px;color:#0000f5;letter-spacing:-0.781px;left:98.75px;">20:13:11</span>
<span class="t" id="t102" style="top:881.85px;font-size:18.8px;line-height:18.8px;color:#0000f5;left:171px;">:</span>
<span class="t" id="t103" style="top:881.85px;font-size:18.8px;line-height:18.8px;color:#0000f5;letter-spacing:-0.214px;left:178.4px;">Number of partitions: /Users/clemenswegener/workspace/code/chair/analog-waveguide-firmware/Release/bin/Analog-Waveguide_v</span>
<span class="t" id="t104" style="top:904.63px;font-size:18.8px;line-height:18.8px;color:#0000f5;letter-spacing:-0.781px;left:98.75px;">20:13:11</span>
<span class="t" id="t105" style="top:904.63px;font-size:18.8px;line-height:18.8px;color:#0000f5;left:171px;">:</span>
<span class="t" id="t106" style="top:904.63px;font-size:18.8px;line-height:18.8px;color:#0000f5;letter-spacing:-0.541px;left:178.4px;">Number of segments: 1</span>
<span class="t" id="t107" style="top:927.41px;font-size:18.8px;line-height:18.8px;color:#0000f5;letter-spacing:-0.781px;left:98.75px;">20:13:11</span>
<span class="t" id="t108" style="top:927.41px;font-size:18.8px;line-height:18.8px;color:#0000f5;left:171px;">:</span>
<span class="t" id="t109" style="top:927.41px;font-size:18.8px;line-height:18.8px;color:#0000f5;letter-spacing:-0.078px;left:178.4px;">segment[0]: address= 0x0, size= 0x290B0</span>
<div style="left:1245.2px;top:721.4px;width:26.2px;height:248.6px;background:linear-gradient(90deg,#e6e6e6,#f2f2f2 50%,#e4e4e4);"></div>
<div style="left:1248.6px;top:880.5px;width:17.6px;height:63.9px;background:linear-gradient(90deg,#fbfbfb,#e9e9e9);border:2px solid #c3c3c3;border-radius:5px;"></div>
<svg style="left:1247.5px;top:723px" width="20" height="20" viewBox="-10 -10 20 20"><path d="M-5.5 2.75 L0 -2.75 L5.5 2.75" fill="none" stroke="#555" stroke-width="1.500"/></svg>
<svg style="left:1247.5px;top:947.5px" width="20" height="20" viewBox="-10 -10 20 20"><path d="M-5.5 -2.75 L0 2.75 L5.5 -2.75" fill="none" stroke="#555" stroke-width="1.500"/></svg>
<div style="left:88.9px;top:970px;width:1182.5px;height:25.2px;background:linear-gradient(#e6e6e6,#f0f0f0 50%,#e4e4e4);"></div>
<div style="left:114.4px;top:973.5px;width:1009.6px;height:18px;background:linear-gradient(#fbfbfb,#e9e9e9);border:2px solid #c3c3c3;border-radius:5px;"></div>
<svg style="left:90.5px;top:972px" width="20" height="20" viewBox="-10 -10 20 20"><path d="M2.75 -5.5 L-2.75 0 L2.75 5.5" fill="none" stroke="#555" stroke-width="1.500"/></svg>
<svg style="left:1224px;top:972px" width="20" height="20" viewBox="-10 -10 20 20"><path d="M-2.75 -5.5 L2.75 0 L-2.75 5.5" fill="none" stroke="#555" stroke-width="1.500"/></svg>
<svg style="left:1288px;top:727px" width="44" height="46" viewBox="0 0 44 46">
<path d="M33.500 3 L27.700 16.200 M37.900 5.600 L32.200 17.800" stroke="#12b0ee" stroke-width="2.300" fill="none" stroke-linecap="round"/>
<path d="M21.800 14.300 L36.500 22.300 L27.200 41.900 L5 27.600 Z" fill="none" stroke="#12b0ee" stroke-width="2.900" stroke-linejoin="round"/>
<path d="M18 18.700 L33.800 27" stroke="#12b0ee" stroke-width="2.700" fill="none"/>
<path d="M12.500 32 L15 27.500 M19.800 36.500 L22.300 32" stroke="#12b0ee" stroke-width="3" fill="none"/>
</svg>
<svg style="left:1287px;top:787px" width="46" height="46" viewBox="0 0 46 46">
<path d="M4.300 2.100 H35.400 L43.700 10.500 V42.500 Q43.700 44 42.200 44 H4.300 Q2.800 44 2.800 42.500 V3.600 Q2.800 2.100 4.300 2.100 Z" fill="#12b0ee"/>
<rect x="12.200" y="5.500" width="22.600" height="11.100" fill="#f7fbfd"/>
<rect x="27.600" y="6.400" width="5.500" height="9.700" fill="#2bb6ee"/>
<rect x="6.200" y="22.200" width="34.800" height="18.400" fill="#f4f4f4"/>
</svg>
<div style="left:87.2px;top:1030px;width:1112.3px;height:30.2px;background:#f6f6f6;border:1px solid #c4c4c4;border-radius:5px;box-shadow:inset 0 1px 2px rgba(0,0,0,0.12);"></div>
<div style="left:91.4px;top:1035px;width:1104.1px;height:20.7px;background:linear-gradient(#bccd00,#b6c700);border-radius:3px;"></div>
<span class="t" id="t110" style="top:1033.82px;font-size:21px;line-height:21px;color:#222;letter-spacing:-0.140px;left:1216.3px;">100%</span>
<svg style="left:1290px;top:1024px" width="42" height="42" viewBox="0 0 42 42">
<circle cx="20.500" cy="20.600" r="15.800" fill="none" stroke="#eda3cb" stroke-width="2.600"/>
<path d="M15.700 15.800 L25.300 25.400 M25.300 15.800 L15.700 25.400" stroke="#e98fc0" stroke-width="2.300" fill="none"/></svg>
<div style="left:1370px;top:157.3px;width:235.6px;height:43px;background:#03a9e0;border-radius:5px;"></div>
<span class="t" id="t111" style="top:168.50px;font-size:21.5px;line-height:21.5px;color:#fff;letter-spacing:-1.959px;left:1384.7px;">USB</span>
<svg style="left:1577px;top:175px" width="14" height="9" viewBox="-1 -1 14 9"><path d="M0 0 H12 L6.0 7 Z" fill="#5a4a48"/></svg>
<div style="left:1609px;top:157.3px;width:231px;height:43px;background:#bbcc00;border-radius:5px;"></div>
<span class="t" id="t112" style="top:168.50px;font-size:21.5px;line-height:21.5px;color:#fff;letter-spacing:-0.595px;left:1673.8px;">Disconnect</span>
<div style="left:1370px;top:211.7px;width:476.3px;height:604.3px;background:#03234b;border-radius:13px;"></div>
<span class="t" id="t113" style="top:223.22px;font-size:21px;line-height:21px;color:#8d9cb3;letter-spacing:-0.410px;left:1522.8px;">USB configuration</span>
<div style="left:1379.5px;top:245.6px;width:449.3px;height:3px;background:#dfe2e6;"></div>
<span class="t" id="t114" style="top:267.92px;font-size:19px;line-height:19px;color:#8d9cb3;letter-spacing:-0.420px;left:1378px;">Port</span>
<div style="left:1538.4px;top:265px;width:244.3px;height:42.5px;background:#5d7794;border-radius:4px;box-shadow:inset 0 -1px 0 rgba(0,0,0,0.18);"></div>
<div style="left:1784.5px;top:265px;width:53.5px;height:42.5px;background:#5d7794;border-radius:4px;box-shadow:inset 0 -1px 0 rgba(0,0,0,0.18);"></div>
<span class="t" id="t115" style="top:275.72px;font-size:21px;line-height:21px;color:#47617f;letter-spacing:-2.120px;left:1553.5px;">USB1</span>
<svg style="left:1754.5px;top:282px" width="14" height="9" viewBox="-1 -1 14 9"><path d="M0 0 H12 L6.0 7 Z" fill="#2b4360"/></svg>
<svg style="left:1799px;top:274px" width="24" height="24" viewBox="0 0 24 24">
<path d="M18.700 9.800 A7.200 7.200 0 0 0 5.800 8" fill="none" stroke="#1a7bb2" stroke-width="3"/>
<path d="M5.300 14.200 A7.200 7.200 0 0 0 18.200 16" fill="none" stroke="#1a7bb2" stroke-width="3"/>
<path d="M21 4.800 V11.200 H14.600 Z" fill="#1a7bb2"/><path d="M3 19.200 V12.800 H9.400 Z" fill="#1a7bb2"/></svg>
<span class="t" id="t116" style="top:324.12px;font-size:19px;line-height:19px;color:#8d9cb3;letter-spacing:-0.573px;left:1378px;">Serial number</span>
<span class="t" id="t117" style="top:324.69px;font-size:17.5px;line-height:17.5px;color:#8d9cb3;letter-spacing:0.039px;left:1715.5px;">207B33A23142</span>
<span class="t" id="t118" style="top:362.42px;font-size:19px;line-height:19px;color:#8d9cb3;letter-spacing:-1.394px;left:1378px;">PID</span>
<div style="left:1538.4px;top:359.5px;width:173.2px;height:41.2px;background:#5d7794;border-radius:4px;box-shadow:inset 0 -1px 0 rgba(0,0,0,0.18);"></div>
<span class="t" id="t119" style="top:370.42px;font-size:21px;line-height:21px;color:#162d4c;letter-spacing:-1.017px;left:1553.5px;">0xDF11</span>
<span class="t" id="t120" style="top:418.22px;font-size:19px;line-height:19px;color:#8d9cb3;letter-spacing:-1.094px;left:1378px;">VID</span>
<div style="left:1538.4px;top:415.5px;width:173.2px;height:41.5px;background:#5d7794;border-radius:4px;box-shadow:inset 0 -1px 0 rgba(0,0,0,0.18);"></div>
<span class="t" id="t121" style="top:426.42px;font-size:21px;line-height:21px;color:#162d4c;letter-spacing:0.919px;left:1553.5px;">0x0483</span>
<span class="t" id="t122" style="top:474.42px;font-size:19px;line-height:19px;color:#8d9cb3;letter-spacing:-0.382px;left:1378px;">Timeout (ms)</span>
<div style="left:1538.4px;top:472px;width:173.2px;height:41.2px;background:#5d7794;border-radius:4px;box-shadow:inset 0 -1px 0 rgba(0,0,0,0.18);"></div>
<span class="t" id="t123" style="top:482.42px;font-size:21px;line-height:21px;color:#162d4c;letter-spacing:1.148px;left:1553.5px;">30000</span>
<span class="t" id="t124" style="top:530.92px;font-size:19px;line-height:19px;color:#8d9cb3;letter-spacing:-0.488px;left:1378px;">Read Unprotect (MCU)</span>
<div style="left:1618.3px;top:528px;width:30.7px;height:31.5px;background:#5a7491;border-radius:4px;box-shadow:inset 0 -2px 0 rgba(0,0,0,0.15);"></div>
<span class="t" id="t125" style="top:575.92px;font-size:19px;line-height:19px;color:#8d9cb3;letter-spacing:-0.640px;left:1378px;">TZEN Regression (MCU)</span>
<div style="left:1618.3px;top:573px;width:30.7px;height:31.3px;background:#5a7491;border-radius:4px;box-shadow:inset 0 -2px 0 rgba(0,0,0,0.15);"></div>
<div style="left:1370px;top:821.8px;width:476.3px;height:245.2px;background:#03234b;border-radius:13px;"></div>
<span class="t" id="t126" style="top:833.05px;font-size:20.5px;line-height:20.5px;color:#fff;letter-spacing:0.000px;left:1526.5px;">Target information</span>
<div style="left:1379.4px;top:855.2px;width:457px;height:3.1px;background:#dfe2e6;"></div>
<span class="t" id="t127" style="top:864.14px;font-size:18.5px;line-height:18.5px;color:#fff;letter-spacing:-0.419px;left:1378.6px;">Board</span>
<span class="t" id="t128" style="top:859.28px;font-size:24px;line-height:24px;color:#fff;right:89.8px;">--</span>
<span class="t" id="t129" style="top:888.19px;font-size:18.5px;line-height:18.5px;color:#fff;letter-spacing:-0.192px;left:1378.6px;">Device</span>
<span class="t" id="t130" style="top:888.44px;font-size:17.5px;line-height:17.5px;color:#fff;letter-spacing:-0.173px;left:1639.7px;">STM32G47x/G48x/G414</span>
<span class="t" id="t131" style="top:912.24px;font-size:18.5px;line-height:18.5px;color:#fff;letter-spacing:0.297px;left:1378.6px;">Type</span>
<span class="t" id="t132" style="top:912.49px;font-size:17.5px;line-height:17.5px;color:#fff;letter-spacing:-0.730px;left:1790.8px;">MCU</span>
<span class="t" id="t133" style="top:936.29px;font-size:18.5px;line-height:18.5px;color:#fff;letter-spacing:-0.475px;left:1378.6px;">Device ID</span>
<span class="t" id="t134" style="top:936.54px;font-size:17.5px;line-height:17.5px;color:#fff;letter-spacing:0.878px;left:1778px;">0x469</span>
<span class="t" id="t135" style="top:960.34px;font-size:18.5px;line-height:18.5px;color:#fff;letter-spacing:-0.579px;left:1378.6px;">Revision ID</span>
<span class="t" id="t136" style="top:955.48px;font-size:24px;line-height:24px;color:#fff;right:89.8px;">--</span>
<span class="t" id="t137" style="top:984.39px;font-size:18.5px;line-height:18.5px;color:#fff;letter-spacing:-0.542px;left:1378.6px;">Flash size</span>
<span class="t" id="t138" style="top:984.64px;font-size:17.5px;line-height:17.5px;color:#fff;letter-spacing:-0.881px;left:1776.2px;">512 KB</span>
<span class="t" id="t139" style="top:1008.44px;font-size:18.5px;line-height:18.5px;color:#fff;letter-spacing:-1.331px;left:1378.6px;">CPU</span>
<span class="t" id="t140" style="top:1008.69px;font-size:17.5px;line-height:17.5px;color:#fff;letter-spacing:0.064px;left:1747px;">Cortex-M4</span>
<span class="t" id="t141" style="top:1032.49px;font-size:18.5px;line-height:18.5px;color:#fff;letter-spacing:-0.185px;left:1378.6px;">Bootloader Version</span>
<span class="t" id="t142" style="top:1027.63px;font-size:24px;line-height:24px;color:#fff;right:89.8px;">--</span>
<div style="left:1845.8px;top:153px;width:2.4px;height:922px;background:#d0d2d4;"></div>
<div style="left:1362px;top:1073.4px;width:484px;height:1.6px;background:#d2d2d2;"></div>
<div style="left:1848px;top:152.5px;width:64px;height:927.5px;background:#03234b;border-radius:0 0 10px 0;"></div>
<div style="left:1911.9px;top:152px;width:1.9px;height:923px;background:#f4f6f8;"></div>
<div style="left:1852.6px;top:212.4px;width:60px;height:3px;background:#d4d8de;"></div>
<div style="left:1852.6px;top:276.4px;width:60px;height:3px;background:#d4d8de;"></div>
<div style="left:1852.6px;top:340.6px;width:60px;height:3px;background:#d4d8de;"></div>
<div style="left:1852.6px;top:404.4px;width:60px;height:3px;background:#d4d8de;"></div>
<div style="left:1852.6px;top:468.4px;width:60px;height:3px;background:#d4d8de;"></div>
<div style="left:1862.3px;top:162.3px;width:40.1px;height:39.9px;border:2px solid #a8d400;"></div>
<div style="left:1862.3px;top:226.5px;width:40.1px;height:39.9px;border:2px solid #a8d400;"></div>
<div style="left:1862.3px;top:290.8px;width:40.1px;height:39.5px;border:2px solid #4f7a1c;"></div>
<div style="left:1862.3px;top:354.8px;width:40.1px;height:39.7px;border:2px solid #a8d400;"></div>
<div style="left:1862.3px;top:418.6px;width:40.1px;height:40px;border:2px solid #a8d400;"></div>
<svg style="left:1862px;top:162px" width="41" height="41" viewBox="0 0 41 41">
<g fill="none" stroke="#a8d400" stroke-width="1.700">
<path d="M5.300 5 H13.500 L18.300 9.800 V24 H5.300 Z"/><path d="M13.200 5.200 V10 H18"/>
<path d="M22 16.300 H30.200 L35 21 V35 H22 Z"/><path d="M29.900 16.500 V21.300 H34.700"/>
<path d="M24.200 5.500 C28.500 4.800 31.500 7 32.200 10.800"/>
<path d="M16.800 35 C12.500 35.700 9.500 33.500 8.800 29.700"/></g>
<path d="M29 9.300 L35.300 9 L32.800 13.700 Z" fill="#a8d400"/><path d="M12 31.200 L5.700 31.500 L8.200 26.800 Z" fill="#a8d400"/>
</svg>
<svg style="left:1862px;top:226px" width="41" height="41" viewBox="0 0 41 41"><text x="4.2" y="28.7" font-family="Liberation Sans, sans-serif" font-weight="700" font-size="21.3" fill="#a8d400" textLength="32" lengthAdjust="spacingAndGlyphs">CPU</text></svg>
<svg style="left:1862px;top:290px" width="41" height="41" viewBox="0 0 41 41"><text x="4.5" y="27.2" font-family="Liberation Sans, sans-serif" font-weight="700" font-size="16.5" fill="#4f7a1c" textLength="31.5" lengthAdjust="spacingAndGlyphs">SWV</text></svg>
<svg style="left:1862px;top:354px" width="41" height="41" viewBox="0 0 41 41">
<path d="M12.500 6.500 C15.500 8.500 17 11 17.500 14.500 M28.500 6.500 C25.500 8.500 24 11 23.500 14.500" fill="none" stroke="#a8d400" stroke-width="1.500"/>
<path d="M20.500 13.200 C25 13.200 27.300 16.500 27.800 20.800 L30.300 21.300 V26.500 H10.700 V21.300 L13.200 20.800 C13.700 16.500 16 13.200 20.500 13.200 Z" fill="#a8d400"/>
<circle cx="15.300" cy="24.600" r="1" fill="#03234b"/><circle cx="25.700" cy="24.600" r="1" fill="#03234b"/>
</svg>
<svg style="left:1862px;top:418px" width="41" height="41" viewBox="0 0 41 41"><text x="9.5" y="19.2" font-family="Liberation Sans, sans-serif" font-weight="700" font-size="15" fill="#a8d400" textLength="21.5" lengthAdjust="spacingAndGlyphs">01</text></svg>
<svg style="left:1862px;top:418px" width="41" height="41" viewBox="0 0 41 41"><text x="9.5" y="33" font-family="Liberation Sans, sans-serif" font-weight="700" font-size="15" fill="#a8d400" textLength="21.5" lengthAdjust="spacingAndGlyphs">10</text></svg>
<svg style="left:0px;top:1040px" width="1920" height="35" viewBox="0 1040 1920 35">
<path d="M10 1062 A15 15 0 0 0 25 1077 L10 1077 Z" fill="#1b1c1e"/>
<path d="M1913.800 1059 A18 18 0 0 1 1895.800 1077 L1913.800 1077 Z" fill="#1b1c1e"/>
<path d="M1912.900 1059 A17.100 17.100 0 0 1 1895.800 1076.100" fill="none" stroke="#7d93ad" stroke-width="1.200"/>
</svg>
</body></html>
